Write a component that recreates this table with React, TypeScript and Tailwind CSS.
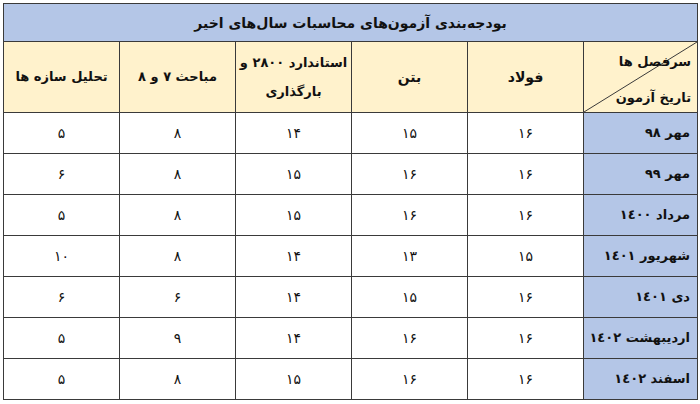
const rows: [string, string, string, string, string, string][] = [
  ["مهر ٩٨", "۱۶", "۱۵", "۱۴", "۸", "۵"],
  ["مهر ٩٩", "۱۶", "۱۶", "۱۵", "۸", "۶"],
  ["مرداد ١٤٠٠", "۱۶", "۱۶", "۱۵", "۸", "۵"],
  ["شهریور ١٤٠١", "۱۵", "۱۳", "۱۴", "۸", "۱۰"],
  ["دی ١٤٠١", "۱۶", "۱۵", "۱۴", "۶", "۶"],
  ["اردیبهشت ١٤٠٢", "۱۶", "۱۶", "۱۴", "۹", "۵"],
  ["اسفند ١٤٠٢", "۱۶", "۱۶", "۱۵", "۸", "۵"],
];

const App = () => {
  return (
    <div className="bg-white w-[700px] h-[404px] p-[3px]" style={{ fontFamily: '"DejaVu Sans", sans-serif' }}>
      <table dir="rtl" className="w-[694px] border-collapse table-fixed text-[#111]">
        <colgroup>
          <col className="w-[114px]" />
          <col className="w-[116px]" />
          <col className="w-[116px]" />
          <col className="w-[116px]" />
          <col className="w-[116px]" />
          <col className="w-[116px]" />
        </colgroup>
        <thead>
          <tr className="h-[38px] bg-[#b4c6e7]">
            <th colSpan={6} className="border border-[#3a3a3a] text-[14px] font-bold text-center pt-[2px]">
              بودجه‌بندی آزمون‌های محاسبات سال‌های اخیر
            </th>
          </tr>
          <tr className="h-[71px] bg-[#fff2cc] text-[13px] font-bold whitespace-nowrap">
            <th className="relative border border-[#3a3a3a] p-0">
              <svg className="absolute inset-0 w-full h-full" viewBox="0 0 100 100" preserveAspectRatio="none">
                <line x1="100" y1="0" x2="0" y2="100" stroke="#3a3a3a" strokeWidth="1" vectorEffect="non-scaling-stroke" />
              </svg>
              <div className="relative flex flex-col justify-between h-[69px] py-[4px] pr-[6px] text-right">
                <span className="mt-[5px]">سرفصل ها</span>
                <span>تاریخ آزمون</span>
              </div>
            </th>
            <th className="border border-[#3a3a3a] text-[14px]">فولاد</th>
            <th className="border border-[#3a3a3a] text-[14px]">بتن</th>
            <th className="border border-[#3a3a3a] leading-[29px]">
              استاندارد ۲۸۰۰ و
              <br />
              بارگذاری
            </th>
            <th className="border border-[#3a3a3a]">مباحث ۷ و ۸</th>
            <th className="border border-[#3a3a3a]">تحلیل سازه ها</th>
          </tr>
        </thead>
        <tbody>
          {rows.map((r) => (
            <tr key={r[0]} className="h-[41px]">
              <td className="border border-[#3a3a3a] bg-[#b4c6e7] text-right pr-[7px] text-[13px] font-bold whitespace-nowrap">{r[0]}</td>
              {r.slice(1).map((v, i) => (
                <td key={i} className="border border-[#3a3a3a] text-center text-[14px]">
                  {v}
                </td>
              ))}
            </tr>
          ))}
        </tbody>
      </table>
    </div>
  );
};

export default App;
